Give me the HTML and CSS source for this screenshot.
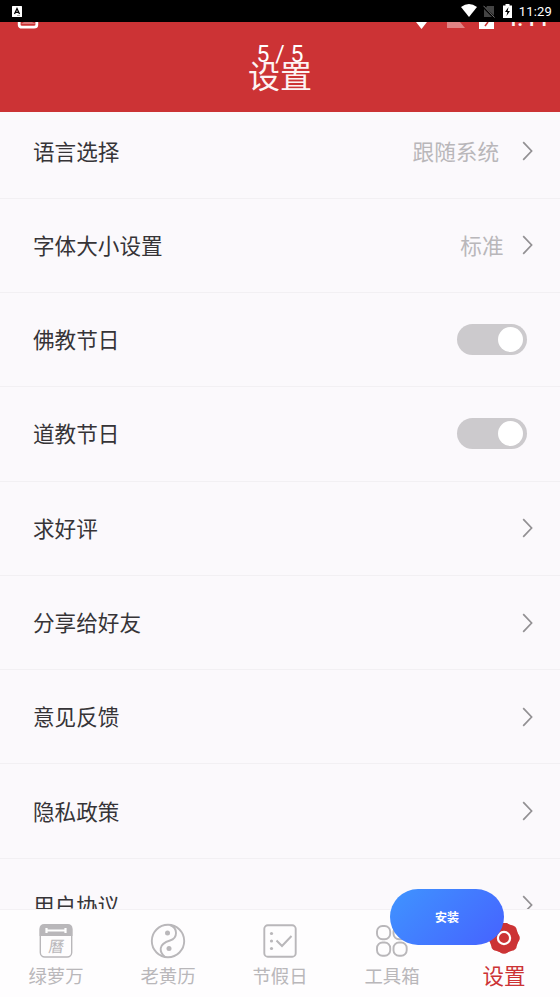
FILE: index.html
```html
<!DOCTYPE html>
<html lang="zh-CN">
<head>
<meta charset="utf-8">
<title>设置</title>
<link rel="stylesheet" href="styles.css">
</head>
<body>
<svg class="defs" aria-hidden="true">
  <symbol id="chevron" viewBox="0 0 11 20"><path d="M1.2 1.2 9.6 10 1.2 18.8" fill="none" stroke="currentColor" stroke-width="1.7"/></symbol>
</svg>
<div class="screen">
  <div class="status">
    <svg class="ime" viewBox="0 0 10 11"><rect width="10" height="11" rx=".5" fill="#fff"/><path d="M2.5 8 5 2.6 7.5 8M3.4 6.4h3.2" fill="none" stroke="#000" stroke-width="1.3"/><path d="M5 9.5h3" stroke="#777" stroke-width=".6"/></svg>
    <div class="status-right">
      <svg width="16" height="13" viewBox="0 0 16 13"><path d="M0 3Q8-2.8 16 3L8 13Z" fill="#fff"/></svg>
      <svg class="sim" width="12" height="13" viewBox="0 0 12 13"><path d="M4 1h7v9.5L3 3ZM1 4l8 8H1Z" fill="#444"/><path d="M.5.8 11.5 12.5" stroke="#777" stroke-width="1"/></svg>
      <svg class="battery" width="9" height="14" viewBox="0 0 9 14"><path d="M2.5 0h4v1.5H9V14H0V1.5h2.5Z" fill="#fff"/><path d="M5.5 3 2 8h2.3L3.5 12 7 7H4.7Z" fill="#000"/></svg>
      <span class="clock">11:29</span>
    </div>
  </div>
  <header class="header">
    <div class="inner-status">
      <svg width="540" height="7" viewBox="0 0 540 7"><path d="M19.200 -2V3Q19.200 5.200 22 5.200h12Q36.800 5.200 36.800 3V-2" fill="none" stroke="#fff" stroke-width="2.800"/><path d="M21 2 24 0h8l4 2Z" fill="#fff" opacity=".35"/><path d="M416 0h11l-5.500 7Z" fill="#fff"/><path d="M447 0h13l5 6H447Z" fill="#fff" opacity=".4"/><path d="M479 0h15v7H479Z" fill="#fff"/><path d="M488 0 485 4" stroke="#cc3333" stroke-width="1.500"/></svg>
      <span class="inner-clock">4:44</span>
    </div>
    <span class="counter">5 / 5</span>
    <h1>设置</h1>
  </header>
  <main class="list">
    <div class="row"><span>语言选择</span><span class="value wide">跟随系统</span><svg class="chevron"><use href="#chevron"/></svg></div>
    <div class="row"><span>字体大小设置</span><span class="value">标准</span><svg class="chevron"><use href="#chevron"/></svg></div>
    <div class="row"><span>佛教节日</span><i class="switch"></i></div>
    <div class="row"><span>道教节日</span><i class="switch"></i></div>
    <div class="row"><span>求好评</span><svg class="chevron"><use href="#chevron"/></svg></div>
    <div class="row"><span>分享给好友</span><svg class="chevron"><use href="#chevron"/></svg></div>
    <div class="row"><span>意见反馈</span><svg class="chevron"><use href="#chevron"/></svg></div>
    <div class="row"><span>隐私政策</span><svg class="chevron"><use href="#chevron"/></svg></div>
    <div class="row"><span>用户协议</span><svg class="chevron"><use href="#chevron"/></svg></div>
  </main>
  <nav class="tabs">
    <div class="tab">
      <svg class="icon" viewBox="0 0 36 36"><rect x="2.300" y="2" width="31.400" height="32" rx="4.500" fill="none" stroke="currentColor" stroke-width="1.400"/><path d="M1.500 13V6q0-5 5-5h23q5 0 5 5v7Z" fill="currentColor"/><path d="M9 7.500h18M8.500 5v5M27.500 5v5" stroke="#fff" stroke-width="2.200"/><text x="18" y="29.500" text-anchor="middle" font-size="15.500" transform="translate(3.400) skewX(-7)" fill="currentColor">曆</text></svg>
      <span>绿萝万</span>
    </div>
    <div class="tab">
      <svg class="icon" viewBox="0 0 36 36"><g fill="none" stroke="currentColor" stroke-width="1.900"><circle cx="18" cy="18" r="16.200"/><path d="M20 2C28 5 28 15 20 17.500 8 21 9 29 15 34"/></g><circle cx="17.500" cy="10" r="2.500" fill="currentColor"/><circle cx="19" cy="25.500" r="2.500" fill="currentColor"/></svg>
      <span>老黄历</span>
    </div>
    <div class="tab">
      <svg class="icon" viewBox="0 0 36 36"><rect x="2.300" y="2.300" width="31.400" height="31.400" rx="3.500" fill="none" stroke="currentColor" stroke-width="1.900"/><path d="m14.500 17.500 5.500 5.500 9.500-10" fill="none" stroke="currentColor" stroke-width="2"/><g fill="currentColor"><circle cx="9.500" cy="10.500" r="1.600"/><circle cx="9.500" cy="18" r="1.600"/><circle cx="9.500" cy="25.500" r="1.600"/></g></svg>
      <span>节假日</span>
    </div>
    <div class="tab">
      <svg class="icon" viewBox="0 0 36 36"><g fill="none" stroke="currentColor" stroke-width="1.900"><rect x="3" y="3" width="13.200" height="13.200" rx="5.500"/><rect x="19.500" y="3" width="13.200" height="13.200" rx="5.500"/><rect x="3" y="19.500" width="13.200" height="13.200" rx="5.500"/><rect x="19.500" y="19.500" width="13.200" height="13.200" rx="5.500"/></g></svg>
      <span>工具箱</span>
    </div>
    <div class="tab active">
      <svg class="icon" viewBox="0 0 36 36"><g fill="currentColor"><circle cx="18" cy="15" r="14.700"/><circle cx="18" cy="4.500" r="5.300"/><circle cx="25.500" cy="7.500" r="5.300"/><circle cx="28.500" cy="15" r="5.300"/><circle cx="25.500" cy="22.500" r="5.300"/><circle cx="18" cy="25.500" r="5.300"/><circle cx="10.500" cy="22.500" r="5.300"/><circle cx="7.500" cy="15" r="5.300"/><circle cx="10.500" cy="7.500" r="5.300"/></g><circle cx="18" cy="15" r="6.100" fill="none" stroke="#fff" stroke-width="2.200"/></svg>
      <span>设置</span>
    </div>
    <button class="install">安装</button>
  </nav>
</div>
</body>
</html>
```
FILE: styles.css
```css
* { box-sizing: border-box; }
body { margin: 0; font-family: "Noto Sans CJK SC", sans-serif; }
.defs { position: absolute; width: 0; height: 0; }
.screen { width: 560px; height: 997px; display: flex; flex-direction: column; overflow: hidden; background: #fbf9fc; }
.status { flex: none; height: 22px; background: #000; display: flex; justify-content: space-between; padding: 0 8px 0 12px; }
.status svg { display: block; }
.ime { width: 10px; height: 11px; margin-top: 6px; }
.status-right { display: flex; align-items: flex-start; color: #fff; }
.status-right svg { margin-top: 4px; }
.status-right .sim { margin-left: 6px; margin-top: 5px; }
.status-right .battery { margin-left: 8px; }
.clock { font: 13px/23px Roboto, sans-serif; margin-left: 7px; letter-spacing: .2px; }
.header { flex: none; height: 90px; position: relative; z-index: 1; background: #cc3335; color: #fdf3f3; overflow: hidden; display: flex; justify-content: center; }
.header h1 { font-size: 32px; font-weight: 400; line-height: 48px; margin: 28px 0 0; }
.inner-status { position: absolute; left: 0; top: 0; width: 560px; height: 10px; overflow: hidden; }
.inner-status svg { display: block; }
.inner-clock { position: absolute; right: 12px; top: -16px; font: 500 22px/26px Roboto, sans-serif; }
.counter { position: absolute; left: 0; right: 0; top: 19px; text-align: center; font: 400 23px/28px Roboto, sans-serif; color: #fff; }
.list { flex: 1; min-height: 0; overflow: hidden; display: flex; flex-direction: column; }
.row { flex: none; height: 94.3px; border-bottom: 1.5px solid #f2f0f3; padding: 0 27px 0 33px; display: flex; align-items: center; font-size: 21.600px; line-height: 32px; color: #363437; }
.row:first-child { height: 86.7px; padding-bottom: 7px; }
.row > span { position: relative; top: -.5px; }
.row > :last-child { margin-left: auto; }
.value { margin-left: auto; margin-right: 18.5px; color: #b9b7ba; }
.value.wide { margin-right: 23px; }
.row .value + .chevron { margin-left: 0; }
.chevron { width: 11px; height: 20px; color: #929093; }
.switch { width: 70px; height: 31px; margin-right: 6px; border-radius: 16px; background: #cccacd; padding: 3px 4px 0 41px; }
.switch::before { content: ""; display: block; width: 25px; height: 25px; border-radius: 50%; background: #fff; }
.tabs { flex: none; height: 88px; position: relative; background: #fefdfe; border-top: 1.500px solid #f3f1f4; display: grid; grid-template-columns: repeat(5, 1fr); }
.tab { display: flex; flex-direction: column; align-items: center; padding-top: 13px; color: #b9b7ba; font-size: 18.400px; line-height: 28px; }
.tab span { margin-top: 2px; }
.icon { width: 36px; height: 36px; }
.active { color: #cc3335; font-size: 21.500px; }
.install { position: absolute; left: 390px; top: -21px; width: 114px; height: 56px; border: 0; border-radius: 28px; padding: 0; background: linear-gradient(135deg, #3f94ff, #4662ff); color: #fff; font: 700 12px/18px "Noto Sans CJK SC", sans-serif; }
```
